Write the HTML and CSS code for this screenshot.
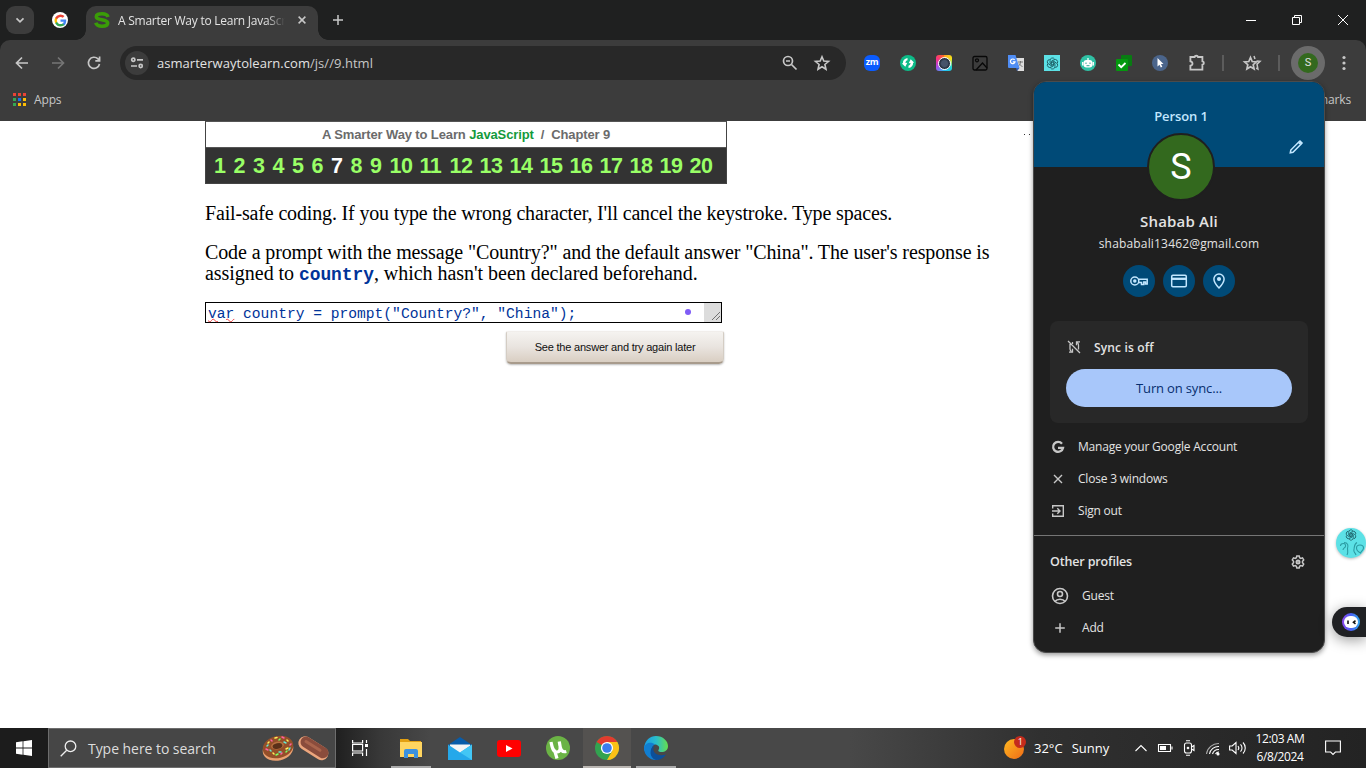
FILE: index.html
```html
<!DOCTYPE html>
<html lang="en">
<head>
<meta charset="utf-8">
<title>A Smarter Way to Learn JavaScript</title>
<link rel="stylesheet" href="styles.css">
</head>
<body>
<svg class="defs" width="0" height="0">
  <defs>
    <symbol id="google" viewBox="0 0 24 24">
      <path fill="#4285f4" d="M22.6 12.3c0-.8-.1-1.5-.2-2.3H12v4.5h6c-.3 1.400-1 2.500-2.200 3.300v2.800h3.600c2.100-1.900 3.200-4.800 3.200-8.300z"/>
      <path fill="#34a853" d="M12 23c3 0 5.500-1 7.400-2.700l-3.600-2.800c-1 .7-2.300 1.100-3.800 1.100-2.900 0-5.300-1.900-6.200-4.500H2.200v2.800C4 20.500 7.700 23 12 23z"/>
      <path fill="#fbbc05" d="M5.800 14.100a6.600 6.600 0 0 1 0-4.200V7.100H2.200a11 11 0 0 0 0 9.800z"/>
      <path fill="#ea4335" d="M12 5.400c1.600 0 3.100.6 4.200 1.600l3.200-3.100A11 11 0 0 0 2.200 7.100l3.600 2.800C6.700 7.300 9.100 5.400 12 5.400z"/>
    </symbol>
    <symbol id="knot" viewBox="0 0 16 16">
      <g fill="none" stroke="currentColor" stroke-width="1">
        <path id="petal" d="M8 9.800 5 8V4.200A3 3 0 0 1 10.500 2.500"/>
        <use href="#petal" transform="rotate(60 8 8)"/><use href="#petal" transform="rotate(120 8 8)"/>
        <use href="#petal" transform="rotate(180 8 8)"/><use href="#petal" transform="rotate(240 8 8)"/>
        <use href="#petal" transform="rotate(300 8 8)"/>
      </g>
    </symbol>
  </defs>
</svg>

<header class="browser">
  <div class="tabs">
    <div class="tab-search"><svg width="10" height="10" viewBox="0 0 10 10" class="line"><path d="m1.500 3.300 3.500 3.500 3.500-3.500" stroke-width="1.700"/></svg></div>
    <div class="pinned"><svg width="13" height="13"><use href="#google"/></svg></div>
    <div class="tab">
      <svg width="16" height="16" viewBox="0 0 16 16"><path d="M14 5C13.400 2.600 11 1.700 8 1.700 4.600 1.700 2.300 2.700 2.300 4.700 2.300 8.900 13.700 6.600 13.700 11.100c0 2.200-2.500 3.200-5.700 3.200-3.600 0-5.500-1-6.200-3.500" fill="none" stroke="#3a9c08" stroke-width="3.600"/></svg>
      <span class="tab-title">A Smarter Way to Learn JavaScript</span>
      <svg width="8" height="8" viewBox="0 0 8 8" class="line"><path d="m.6.6 6.800 6.800M7.400.6.600 7.400" stroke-width="1.500"/></svg>
    </div>
    <svg class="new-tab line" width="10" height="10" viewBox="0 0 10 10"><path d="M5 0v10M0 5h10" stroke-width="1.500"/></svg>
    <div class="window-buttons">
      <svg width="10" height="10" viewBox="0 0 10 10" class="white"><path d="M0 5.500h10"/></svg>
      <svg width="10" height="10" viewBox="0 0 10 10" class="white"><path d="M.5 2.500h7v7h-7zM2.500 2.500v-2h7v7h-2"/></svg>
      <svg width="10" height="10" viewBox="0 0 10 10" class="white"><path d="m0 0 10 10M10 0 0 10"/></svg>
    </div>
  </div>
  <div class="toolbar">
    <svg width="16" height="16" viewBox="0 0 16 16" class="line"><path d="M14 8H3M8 2.500 2.500 8 8 13.500" stroke-width="1.700"/></svg>
    <svg width="16" height="16" viewBox="0 0 16 16" class="line dim"><path d="M2 8h11M8 2.500 13.500 8 8 13.500" stroke-width="1.700"/></svg>
    <svg width="16" height="16" viewBox="0 0 16 16" class="line"><path d="M13.500 9A5.600 5.600 0 1 1 12 3.900L13.500 5.500M13.600 1.500v4.300H9.300" stroke-width="1.700"/></svg>
    <div class="omnibox">
      <div class="site-info"><svg width="14" height="14" viewBox="0 0 14 14" class="line"><path d="M7 3.800h6M1 10h6" stroke-width="1.700"/><circle cx="3.300" cy="3.800" r="1.600" stroke-width="1.700"/><circle cx="10.700" cy="10" r="1.600" stroke-width="1.700"/></svg></div>
      <span class="url">asmarterwaytolearn.com<span class="path">/js//9.html</span></span>
      <svg width="16" height="16" viewBox="0 0 16 16" class="line"><circle cx="6" cy="6" r="4.500" stroke-width="1.700"/><path d="M4 6h4M9.500 9.500l5 5" stroke-width="1.700"/></svg>
      <svg width="16" height="16" viewBox="0 0 16 16" class="line"><path d="m8 1.800 1.800 4.300 4.700.4-3.600 3 1.100 4.700-4-2.500-4 2.500 1.100-4.700-3.600-3 4.700-.4z" stroke-width="1.600"/></svg>
    </div>
    <div class="extensions">
      <span class="zm">zm</span>
      <svg width="16" height="16" viewBox="0 0 16 16"><circle cx="8" cy="8" r="8" fill="#0dbb88"/><path d="M7.500 3C4.500 3.500 2.800 5.500 2.900 8.300L1.900 8.500 5.300 11.800 7.300 7.800 5.500 8C5.500 6.500 6.200 5.600 7.500 5.300zM8.500 13C11.500 12.500 13.200 10.500 13.100 7.700L14.100 7.500 10.700 4.200 8.700 8.200 10.500 8C10.500 9.500 9.800 10.400 8.500 10.700z" fill="#fff"/></svg>
      <span class="lens"><i></i></span>
      <svg width="16" height="16" viewBox="0 0 16 16" fill="none" stroke="#080808" stroke-width="1.300"><rect x="1" y="1.500" width="14" height="13.500" rx="1.500"/><circle cx="5" cy="5.300" r="1.500"/><path d="m4 15 6.500-7 4.500 5"/></svg>
      <svg width="16" height="16" viewBox="0 0 16 16"><path fill="#dedede" d="M7 3h9v13H9.500z"/><path d="M10 7h5M12.500 6v1c0 2-1 3.500-2.500 4.500M11 8.500c1 1.500 2 2.500 3.500 3" stroke="#777" fill="none"/><path fill="#4f8df5" d="M0 0h7.500l4 13H1a1 1 0 0 1-1-1z"/><path d="m8 13 3.500 0L9 16z" fill="#3461bd"/><path d="M6.600 4.900A2.300 2.300 0 1 0 7 6.800H4.800" fill="none" stroke="#fff" stroke-width="1.200"/></svg>
      <span class="gpt"><svg width="13" height="13"><use href="#knot"/></svg></span>
      <svg width="16" height="16" viewBox="0 0 16 16"><circle cx="8" cy="8" r="8" fill="#30c1a5"/><rect x="3.500" y="5" width="9" height="7.500" rx="3" fill="#fff"/><path d="M8 5V3M2.700 7v3.500M13.300 7v3.500" stroke="#fff" stroke-width="1.300"/><path d="M6 7.500v1.500M10 7.500v1.500M6.500 10.700h3" stroke="#30a995" fill="none"/></svg>
      <svg width="16" height="16" viewBox="0 0 16 16"><rect x="5" width="11" height="11" rx="1" fill="#087c12"/><rect y="4" width="12" height="12" rx="1" fill="#04980e"/><path d="m2.500 9.500 2.700 2.700L9.500 8" fill="none" stroke="#fff" stroke-width="1.800"/></svg>
      <svg width="16" height="16" viewBox="0 0 16 16"><circle cx="8" cy="8" r="8" fill="#4b658b"/><path d="m5.500 3 6 6H9l1.300 2.800-1.500.7L7.500 9.700 5.500 11.500z" fill="#fff"/></svg>
      <svg class="puzzle line" width="16" height="16" viewBox="0 0 16 16"><path d="M1.400 2h4.200C5.800.3 8.800.3 9 2h4.400v4.300c2 .3 2 3.100 0 3.400v5H1.400v-4c2.800-.4 2.800-4 0-4.400z" stroke-width="1.800"/></svg>
    </div>
    <i class="divider first"></i>
    <svg width="18" height="16" viewBox="0 0 18 16" class="line"><path d="m7.500 2.500 1.700 4 4.200.4-3.200 2.800.9 4.300-3.600-2.300L3.900 14l.9-4.300-3.200-2.800 4.200-.4z" stroke-width="1.700"/><path d="m11 1 1 3M13.500 6l3.500.3-3 2.800.9 4.900-1.700-1" stroke-width="1.500"/></svg>
    <i class="divider second"></i>
    <div class="me"><b>S</b></div>
    <svg class="dots" width="4" height="16" viewBox="0 0 4 16" fill="#c7c7c7"><circle cx="2" cy="2.500" r="1.600"/><circle cx="2" cy="8" r="1.600"/><circle cx="2" cy="13.500" r="1.600"/></svg>
  </div>
  <div class="bookmarks">
    <div class="apps-grid"><i></i><i></i><i></i><i></i><i></i><i></i><i></i><i></i><i></i></div>
    <span>Apps</span>
    <span class="all">All Bookmarks</span>
  </div>
</header>

<main class="page">
  <section class="lesson">
    <div class="banner">
      <h1>A Smarter Way to Learn <b>JavaScript</b> &nbsp;/&nbsp; Chapter 9</h1>
      <nav><a>1</a><a>2</a><a>3</a><a>4</a><a>5</a><a>6</a><a class="current">7</a><a>8</a><a>9</a><a>10</a><a>11</a><a>12</a><a>13</a><a>14</a><a>15</a><a>16</a><a>17</a><a>18</a><a>19</a><a>20</a></nav>
    </div>
    <p class="note">Fail-safe coding. If you type the wrong character, I'll cancel the keystroke. Type spaces.</p>
    <p class="question"><span class="q1">Code a prompt with the message "Country?" and the default answer "China". The user's response is</span><br><span class="q2">assigned to <code>country</code>, which hasn't been declared beforehand.</span></p>
    <div class="answer">
      <span class="code"><u>var</u> country = prompt("Country?", "China");</span>
      <i class="purple"></i>
      <span class="grip"><svg width="10" height="10" viewBox="0 0 10 10" stroke="#555" stroke-width=".8"><path d="m1 9 8-8M5 9l4-4"/></svg></span>
    </div>
    <div class="give-up">See the answer and try again later</div>
  </section>
  <div class="specks"><i></i><i></i></div>
</main>

<aside class="profile">
  <div class="cover">
    <div class="person">Person 1</div>
    <div class="avatar">S</div>
    <svg class="pencil" width="14" height="14" viewBox="0 0 14 14" fill="none" stroke="#c2e7ff" stroke-width="1.500"><path d="m1.300 12.700.5-2.700 7.700-7.700 2.200 2.200L4 12.200z"/><path d="m10 2.300 1-1 1.700 1.700-1 1" stroke-width="2"/></svg>
  </div>
  <div class="name">Shabab Ali</div>
  <div class="email">shababali13462@gmail.com</div>
  <div class="shortcuts">
    <span><svg width="20" height="20" viewBox="0 0 20 20" class="sky"><circle cx="5.800" cy="10" r="4"/><circle cx="5.800" cy="10" r="1" fill="#c2e7ff"/><path d="M9.500 8.200h8.700v4.800h-1.700v-2h-1.700v2.500h-2.300V11.500H9.500"/></svg></span>
    <span><svg width="20" height="20" viewBox="0 0 20 20" class="sky"><rect x="2.700" y="4.300" width="14.600" height="11.400" rx="1.200"/><path d="M2.500 7.800h15" stroke-width="2.300"/></svg></span>
    <span><svg width="20" height="20" viewBox="0 0 20 20" class="sky"><path d="M10 17C6.500 13.500 4.900 11 4.900 8.100a5.100 5.100 0 0 1 10.200 0c0 2.900-1.600 5.400-5.100 8.900z"/><circle cx="10" cy="8" r="1.300" fill="#c2e7ff"/></svg></span>
  </div>
  <div class="sync">
    <div class="sync-row"><svg width="14" height="14" viewBox="0 0 14 14" class="line"><path d="m1 1 12 12M3 4v5c0 1 .5 1.800 1.400 2.500M2 12.200h3.500V8.700M5.500 2v2M11.500 9.500V5c0-1-.5-1.800-1.200-2.600M13 1.800H9.500V5.300" stroke-width="1.300"/></svg><b>Sync is off</b></div>
    <div class="sync-button">Turn on sync...</div>
  </div>
  <ul>
    <li><svg width="14" height="14" viewBox="0 0 14 14" class="line"><path d="M11 3.700A5 5 0 1 0 12 7.900H7" stroke-width="2.300"/></svg><span>Manage your Google Account</span></li>
    <li><svg width="14" height="14" viewBox="0 0 14 14" class="line"><path d="m3 3 8 8M11 3l-8 8" stroke-width="1.400"/></svg><span>Close 3 windows</span></li>
    <li><svg width="14" height="14" viewBox="0 0 14 14" class="line"><path d="M1.700 4.500V1.700h10.600v10.600H1.700V9.500M1 7h7.500M6.300 4.300 9 7 6.300 9.700" stroke-width="1.400"/></svg><span>Sign out</span></li>
  </ul>
  <div class="others">
    <h2><span>Other profiles</span><svg width="14" height="14" viewBox="0 0 14 14" class="line"><path d="M5.800 1h2.400l.4 1.700 1.200.7 1.700-.5 1.200 2L11.500 6.300v1.400l1.200 1.400-1.200 2-1.700-.5-1.200.7-.4 1.700H5.800l-.4-1.700-1.200-.7-1.700.5-1.200-2 1.200-1.400V6.300L1.300 4.900l1.200-2 1.700.5 1.200-.7z" stroke-width="1.500"/><circle cx="7" cy="7" r="1.500" stroke-width="2"/></svg></h2>
    <div class="other"><svg width="20" height="20" viewBox="0 0 20 20" class="line"><circle cx="10" cy="10" r="7.500" stroke-width="1.600"/><circle cx="10" cy="8" r="2.500" stroke-width="1.600"/><path d="M4.800 15.500c2.500-3 8-3 10.400 0" stroke-width="1.600"/></svg><span>Guest</span></div>
    <div class="other"><svg width="20" height="20" viewBox="0 0 20 20" class="line"><path d="M10 5.200v9.600M5.200 10h9.600" stroke-width="1.500"/></svg><span>Add</span></div>
  </div>
</aside>

<div class="helper">
  <svg width="30" height="30" viewBox="0 0 30 30" color="#17545c"><use href="#knot" x="9" y="1" width="12" height="12"/><path d="M4.500 18c0-3.500 6-3.500 5 .5-.5 1.500-2.500 1.500-2.500 3.500M8 14.500c4 0 4.500 3 3.500 6 0 2 1 3-.5 6.500M20 27c-1-3-3-2.500-2-6 .5-2 0-5 3-6.500M20.500 20c0-4 7-4 7 0 0 2-2 3-3 5-2-1-4-2.500-4-5z" fill="none" stroke="#2b9ba2" stroke-width="1.100"/></svg>
</div>
<div class="bot"><svg width="18" height="18" viewBox="0 0 18 18"><defs><linearGradient id="ring"><stop stop-color="#8d46ed"/><stop offset=".5" stop-color="#4862f5"/><stop offset="1" stop-color="#31a7ee"/></linearGradient></defs><circle cx="9" cy="9" r="9" fill="url(#ring)"/><rect x="2" y="3" width="14" height="12" rx="6" fill="#fff"/><path d="M6 7.500v3.400M13.500 7.700 11.500 9.300l2 1.500" stroke="#111" stroke-width="1.600" fill="none"/></svg></div>

<footer class="taskbar">
  <div class="start"><svg width="16" height="16" viewBox="0 0 16 16" fill="#fff"><path d="M0 2.300 6.600 1.300v6.200H0zM7.400 1.200 16 0v7.500H7.400zM0 8.400h6.600v6.300L0 13.700zM7.400 8.400H16V16l-8.600-1.200z"/></svg></div>
  <div class="search">
    <svg width="17" height="17" viewBox="0 0 17 17" fill="none" stroke="#eee" stroke-width="1.300"><circle cx="10.500" cy="6.300" r="5.300"/><path d="M6.700 10.200.7 16.200"/></svg>
    <span>Type here to search</span>
    <svg width="68" height="30" viewBox="0 0 68 30">
      <ellipse cx="16" cy="16.500" rx="15.500" ry="11" transform="rotate(-14 16 16.500)" fill="#e9a070"/>
      <ellipse cx="16" cy="14" rx="15.500" ry="11" transform="rotate(-14 16 14)" fill="#944f29"/>
      <ellipse cx="15.500" cy="12.500" rx="6.500" ry="3.800" transform="rotate(-12 15.500 12.500)" fill="#b8703f"/>
      <ellipse cx="15.500" cy="13" rx="5" ry="2.800" transform="rotate(-12 15.500 13)" fill="#5a3019"/>
      <g stroke-width="1.500" stroke-linecap="round"><path stroke="#fff25b" d="m6 10 1-1M13 5l2-.5M25 7l1 1M24 16l2-1M11 20l1 1"/><path stroke="#ff5fa3" d="m9 7 1 1M20 4l2 1M28 12l1-1M20 20l-1 1M4 16l2 1"/><path stroke="#65e7d1" d="m8 17 1 1M17 19h2M22 9l2 1M27 17l1-2M5 13l1-1"/><path stroke="#7cff65" d="m14 22 2-1M24 19l1-1M17 7l1-1"/></g>
      <rect x="35" y="8.500" width="33" height="13.500" rx="6.700" transform="rotate(32 51.500 15)" fill="#eda67d"/>
      <rect x="36.500" y="8.500" width="31" height="11" rx="5.500" transform="rotate(32 51.500 15)" fill="#8a4c3c"/>
      <path d="m44 8.500 14 8.800" stroke="#a9644c" stroke-width="3" stroke-linecap="round"/>
    </svg>
  </div>
  <div class="task-view"><svg width="16" height="16" viewBox="0 0 16 16" fill="none" stroke="#fff" stroke-width="1.200"><path d="M.6 0v3h10V0M.6 16v-3h10v3M.6 4.500h10v6.500H.600zM14.500 0v3M14.500 9v7"/><path d="M13 4h3v3h-3z" fill="#fff" stroke="none"/></svg></div>
  <div class="apps">
    <div class="app open"><svg width="22" height="19" viewBox="0 0 22 19"><path d="M0 0h8l2 2h11v5H0z" fill="#e3a011"/><path d="M0 3h22v15H0z" fill="#ffd560"/><path d="M4 19v-7q0-2 2-2h10q2 0 2 2v7h-4v-4H8v4z" fill="#3c91df"/></svg></div>
    <div class="app"><svg width="24" height="23" viewBox="0 0 24 23"><path d="M0 8 12 0l12 8z" fill="#085ca9"/><path d="M2 7.500h20v9H2z" fill="#f5f5f5"/><path d="m0 7.500 12 8 12-8V23H0z" fill="#25a8ea"/><path d="M24 7.500V23L12 15.500z" fill="#42c6f5"/></svg></div>
    <div class="app"><svg width="24" height="17" viewBox="0 0 24 17"><rect width="24" height="17" rx="3" fill="#f00"/><path d="m9 5 6.500 3.500L9 12z" fill="#fff"/></svg></div>
    <div class="app"><svg width="24" height="24" viewBox="0 0 24 24"><circle cx="12" cy="12" r="12" fill="#6bb345"/><path d="M5 6c1 5 1.800 10.500 6 10 4 0 3.500-5 2.300-10.500M13.300 6c1 6 1.500 11 7 9.500M8.500 14l2.500 8.500" fill="none" stroke="#fff" stroke-width="3.200"/></svg></div>
    <div class="app active"><svg width="24" height="24" viewBox="0 0 24 24"><circle cx="12" cy="12" r="12" fill="#32a350"/><path d="M12 12 1.600 6A12 12 0 0 1 22.400 6z" fill="#e33b2e"/><path d="M12 12V6h10.400A12 12 0 0 1 12 24l5.200-9z" fill="#fbc116"/><circle cx="12" cy="12" r="6.100" fill="#fff"/><circle cx="12" cy="12" r="4.800" fill="#3b7ded"/></svg></div>
    <div class="app edge"><svg width="24" height="24" viewBox="0 0 24 24"><defs><linearGradient id="edge"><stop stop-color="#1a9be5"/><stop offset=".5" stop-color="#29bdcc"/><stop offset="1" stop-color="#66df4d"/></linearGradient></defs><path d="M0 12C1 4 6 0 12 0c7 0 12 5 12 10 0 4-3 6-6.500 6-3 0-4-1-2.500-3 1-3-2-4.500-4-4.500-4 0-7 4-5.500 10Q0 17 0 12z" fill="url(#edge)"/><path d="M0 12C1 7 7 5 11 8.500c-4 2-4 6-2.500 9L14 24h-2A12 12 0 0 1 0 12z" fill="#117ed1"/><path d="M10.500 9.500c-4 6 2.500 12 11.500 9A12 12 0 0 1 12 24C5 22 5 12 10.500 9.500z" fill="#0c4f99"/></svg></div>
  </div>
  <div class="weather">
    <svg width="22" height="24" viewBox="0 0 22 24"><defs><linearGradient id="sun" x1="0" y1="0" x2="1" y2="1"><stop stop-color="#ffba20"/><stop offset="1" stop-color="#ef6b17"/></linearGradient></defs><circle cx="10" cy="13" r="10" fill="url(#sun)"/><circle cx="16" cy="6" r="6" fill="#c42b1c"/><text x="13.700" y="9.200" fill="#fff" font-family="Open Sans" font-size="9">1</text></svg>
    <span>32°C</span><span class="sunny">Sunny</span>
  </div>
  <div class="tray">
    <svg width="16" height="16" viewBox="0 0 16 16"><path d="m2.500 11 5.500-5.500 5.500 5.500"/></svg>
    <svg width="16" height="16" viewBox="0 0 16 16"><path d="M1.500 4.500h12v7h-12zM15 6.500v3"/><path d="M3 6h6v4H3z" fill="#fff" stroke="none"/></svg>
    <svg width="16" height="16" viewBox="0 0 16 16"><rect x="3.500" y="3" width="7" height="10" rx="2"/><circle cx="7" cy="8" r=".8"/><path d="M10.500 7 13 5.500v5L10.500 9M5 .7h4M5 15.300h4"/></svg>
    <svg width="16" height="16" viewBox="0 0 16 16"><path d="M1.500 14A12 12 0 0 1 14 3.500" opacity=".6"/><path d="M4.500 14A9 9 0 0 1 14 6.500M7.500 14A6.500 6.500 0 0 1 14 9.500M10.500 14A4 4 0 0 1 14 12"/><circle cx="13" cy="14" r="1" fill="#fff"/></svg>
    <svg width="17" height="16" viewBox="0 0 17 16"><path d="M.6 6h2.600L7 2.500v11L3.200 10H.6zM9 6c1 1.200 1 2.800 0 4M11.500 4.300c2 2 2 5.400 0 7.400M14 2.500c3 3 3 8 0 11"/></svg>
  </div>
  <div class="clock"><span>12:03 AM</span><span>6/8/2024</span></div>
  <svg class="notice" width="16" height="16" viewBox="0 0 16 16"><path d="M.6 1h14.800v11h-5L8 14.500 5.600 12h-5z"/></svg>
</footer>
</body>
</html>
```

FILE: styles.css
```css
* { box-sizing: border-box; }
body { margin: 0; width: 1366px; height: 768px; overflow: hidden; position: relative; display: flex; flex-direction: column; background: #fff; color: #e3e3e3; font: 12px "Open Sans", "Noto Sans", sans-serif; }
svg { display: block; flex: none; overflow: visible; }
.defs { position: absolute; }
.line { fill: none; stroke: #c7c7c7; }
.dim { stroke: #757575; }
.white { fill: none; stroke: #fff; }

/* Browser frame */
.browser { flex: none; height: 121px; background: #1f2020; }
.tabs { height: 40px; display: flex; align-items: center; padding-left: 6px; }
.tab-search { width: 28px; height: 28px; border-radius: 9px; background: #3c3c3c; display: grid; place-items: center; }
.pinned { width: 16px; height: 16px; margin-left: 18px; border-radius: 50%; background: #fff; display: grid; place-items: center; }
.tab { position: relative; align-self: flex-end; margin-left: 18px; width: 232px; height: 34px; padding: 0 12px 6px 8px; background: #3c3c3c; border-radius: 10px 10px 0 0; display: flex; align-items: center; }
.tab::before, .tab::after { content: ""; position: absolute; bottom: 0; width: 10px; height: 10px; }
.tab::before { left: -10px; background: radial-gradient(circle at 0 0, transparent 9.500px, #3c3c3c 10px); }
.tab::after { right: -10px; background: radial-gradient(circle at 100% 0, transparent 9.500px, #3c3c3c 10px); }
.tab-title { width: 167px; margin: 0 13px 0 8px; overflow: hidden; white-space: nowrap; letter-spacing: -.25px; -webkit-mask-image: linear-gradient(90deg, #000 148px, transparent); mask-image: linear-gradient(90deg, #000 148px, transparent); }
.new-tab { margin-left: 15px; }
.window-buttons { margin-left: auto; display: flex; gap: 36px; padding-right: 18px; }
.toolbar { height: 46px; background: #3c3c3c; border-radius: 10px 10px 0 0; display: flex; align-items: center; padding-left: 14px; }
.toolbar > .line + .line { margin-left: 20px; }
.omnibox { width: 726px; height: 34px; margin-left: 18px; padding: 0 16px 0 5px; border-radius: 17px; background: #282828; display: flex; align-items: center; }
.site-info { width: 24px; height: 24px; border-radius: 50%; background: #3c3c3c; display: grid; place-items: center; }
.url { flex: 1; margin-left: 8px; font-size: 13px; letter-spacing: .04px; }
.path { color: #c7c7c7; }
.omnibox > svg + svg { margin-left: 16px; }
.extensions { display: flex; gap: 20px; margin-left: 18px; }
.puzzle { margin-left: 1px; }
.zm { width: 16px; height: 16px; border-radius: 6px; background: #0b5cff; color: #fff; font-size: 9px; line-height: 14px; font-weight: 700; text-align: center; letter-spacing: -.4px; }
.lens { width: 16px; height: 16px; border-radius: 3px; display: grid; place-items: center; background: conic-gradient(#ff9c20, #f4e51b, #22d1d6, #27bff2, #a84bea, #f83086, #ff6d1c); }
.lens i { width: 13px; height: 13px; border-radius: 50%; background: radial-gradient(circle, #46536a 3px, #2a3444 4.500px); border: 1.500px solid #fff; }
.gpt { width: 16px; height: 16px; background: #5ce1e6; color: #164e56; display: grid; place-items: center; }
.divider { width: 2px; height: 16px; background: #5c5c5c; }
.first { margin: 0 19px 0 17px; }
.second { margin: 0 11px 0 17px; }
.me { width: 34px; height: 34px; border-radius: 50%; background: #6b6b6b; display: grid; place-items: center; }
.me b { width: 20px; height: 20px; border-radius: 50%; background: #33691e; font: 11px/20px Roboto, sans-serif; text-align: center; }
.dots { margin-left: 17px; }
.bookmarks { height: 35px; background: #3c3c3c; display: flex; align-items: center; padding: 0 15px 8px 13px; color: #c7c7c7; letter-spacing: -.15px; }
.apps-grid { display: grid; grid-template-columns: repeat(3, 3px); gap: 2px; margin-right: 8px; }
.apps-grid i { height: 3px; background: #ea4335; }
.apps-grid i:nth-child(4), .apps-grid i:nth-child(7) { background: #34a853; }
.apps-grid i:nth-child(5) { background: #1a73e8; }
.apps-grid i:nth-child(6), .apps-grid i:nth-child(8), .apps-grid i:nth-child(9) { background: #fbbc05; }
.all { margin-left: auto; }

/* Lesson page */
.page { flex: 1; display: flex; color: #000; }
.lesson { width: 800px; margin-left: 205px; }
.banner { width: 522px; height: 63px; border: 1px solid #444; border-top: 1px solid #555; background: #fff; }
.banner h1 { margin: 0; height: 26px; border-bottom: 1px solid #555; font: bold 13px/25px "Liberation Sans", Arial, sans-serif; text-align: center; color: #6b6b6b; letter-spacing: -.12px; }
.banner h1 b { color: #149a3c; }
.banner nav { height: 35px; padding-left: 8px; background: #333; display: grid; grid-template-columns: repeat(9, 19.500px) repeat(11, 30px); font: bold 21.500px/36px "Liberation Sans", Arial, sans-serif; color: #9f6; letter-spacing: -.4px; }
.banner .current { color: #fff; }
.lesson p { margin: 0; font: 20px/21px "Liberation Serif", "Times New Roman", serif; white-space: nowrap; }
.lesson .note { margin-top: 19px; letter-spacing: -.158px; }
.lesson .question { margin-top: 18px; }
.q1 { letter-spacing: -.118px; }
.q2 { letter-spacing: -.035px; }
.lesson code { color: #039; font: bold 17.900px/18px "Liberation Mono", monospace; }
.answer { width: 517px; height: 21px; margin-top: 18px; border: 1px solid #000; display: flex; align-items: center; padding-left: 2px; }
.code { width: 477px; color: #039; font: 14.620px/20px "Liberation Mono", monospace; white-space: pre; padding-top: 2px; }
.code u { text-decoration: underline wavy #e44 .7px; text-underline-offset: 0; }
.purple { width: 6px; height: 6px; border-radius: 50%; background: #7f5cf6; margin-bottom: 2px; }
.grip { margin-left: auto; width: 17px; height: 19px; padding: 8px 0 0 7px; background: #dcdcdc; }
.give-up { width: 218px; height: 33px; margin: 8px 0 0 301px; border: 1px solid #d4cdc4; border-top-color: #f1eeeb; border-bottom: 2px solid #a89b8c; border-radius: 2px 2px 5px 5px; background: linear-gradient(#f5f3f0, #e9e4df 50%, #d9cec2); box-shadow: 0 1px 2px #bbb; font: 11px/31px "Liberation Sans", Arial, sans-serif; letter-spacing: -.2px; text-align: center; color: #111; }
.specks { display: flex; gap: 4px; margin: 13px 0 0 19px; }
.specks i { width: 1px; height: 1px; background: #333; }

/* Profile menu */
.profile { position: absolute; left: 1033px; top: 81px; width: 292px; height: 572px; border: 1px solid #4b4b4b; border-radius: 13px; overflow: hidden; background: #1f1f1f; box-shadow: 0 2px 5px #0006; }
.cover { position: relative; height: 85px; background: #004a77; text-align: center; padding: 25px 0 0 4px; }
.person { font-weight: 600; font-size: 13px; line-height: 18px; letter-spacing: -.1px; color: #c2e7ff; }
.avatar { width: 68px; height: 68px; margin: 8px auto 0; border: 2px solid #1f1f1f; border-radius: 50%; background: #33691e; color: #fff; font: 36px/65px Roboto, sans-serif; }
.pencil { position: absolute; left: 255px; top: 58px; }
.name { margin-top: 43px; font-size: 15px; font-weight: 600; line-height: 22px; text-align: center; letter-spacing: .2px; }
.email { margin-top: 2px; line-height: 20px; text-align: center; letter-spacing: .17px; }
.shortcuts { display: flex; justify-content: center; gap: 8px; margin-top: 11px; }
.shortcuts span { width: 32px; height: 32px; border-radius: 50%; background: #004a77; display: grid; place-items: center; }
.sky { fill: none; stroke: #c2e7ff; stroke-width: 1.500; }
.sync { margin: 24px 16px 0; height: 102px; border-radius: 8px; background: #282828; padding: 16px; }
.sync-row { height: 20px; display: flex; align-items: center; gap: 13px; padding-left: 1px; letter-spacing: .15px; }
.sync-row b { font-weight: 600; }
.sync-button { height: 38px; margin-top: 12px; border-radius: 19px; background: #a8c7fa; color: #062e6f; text-align: center; font-size: 13px; line-height: 38px; letter-spacing: -.15px; }
.profile ul { margin: 8px 0 0; padding: 0; list-style: none; }
.profile li { height: 32px; padding-left: 17px; display: flex; align-items: center; gap: 13px; letter-spacing: -.2px; }
.profile li span, .other span, .others h2 span { padding-bottom: 2px; }
.others { border-top: 1px solid #757575; margin-top: 8px; padding: 15px 16px 0; }
.others h2 { margin: 0; height: 22px; display: flex; align-items: center; justify-content: space-between; font-size: 12.500px; font-weight: 600; letter-spacing: -.15px; padding-right: 3px; }
.other { height: 32px; display: flex; align-items: center; gap: 12px; letter-spacing: -.2px; }
.others h2 + .other { margin-top: 7px; }

/* Floating helpers */
.helper { position: absolute; left: 1336px; top: 528px; width: 30px; height: 30px; border-radius: 50%; background: #5ce1e6; box-shadow: 0 1px 3px #0004; }
.bot { position: absolute; left: 1332px; top: 607px; width: 34px; height: 30px; padding: 6px 0 0 10px; border-radius: 15px 0 0 15px; background: #202124; box-shadow: 0 3px 14px #0006; }

/* Taskbar */
.taskbar { flex: none; height: 40px; display: flex; align-items: center; background: linear-gradient(90deg, #1c1c1c 0, #1c1c1c 330px, #383838 380px, #484848 430px, #484848 850px, #303030 1040px, #232323); color: #fff; }
.start { width: 48px; display: grid; place-items: center; }
.search { width: 288px; height: 40px; border: 1px solid #6d6d6d; background: #464646; padding-left: 11px; display: flex; align-items: center; }
.search span { margin-left: 11px; width: 174px; color: #ddd; font-size: 14px; letter-spacing: -.05px; }
.task-view { width: 48px; margin-right: 2px; display: grid; place-items: center; }
.apps { height: 40px; display: flex; gap: 9px; padding-left: 5px; }
.app { width: 40px; height: 40px; display: grid; place-items: center; }
.open, .edge { border-bottom: 2px solid #aaa; }
.open svg, .edge svg { margin-top: 2px; }
.active { width: 48px; margin: 0 -4px; background: #545250; border-bottom: 2px solid #bab6b2; }
.active svg { margin-top: 2px; }
.weather { margin-left: auto; display: flex; align-items: center; font-size: 13px; width: 129px; }
.weather span { margin-left: 8px; }
.weather .sunny { margin-left: 9px; }
.tray { display: flex; gap: 8px; fill: none; stroke: #fff; stroke-width: 1.100; }
.clock { width: 62px; margin-left: 3px; display: flex; flex-direction: column; align-items: center; line-height: 18px; letter-spacing: -.4px; }
.notice { fill: none; stroke: #fff; stroke-width: 1.100; margin: 0 25px 0 14px; }
```
